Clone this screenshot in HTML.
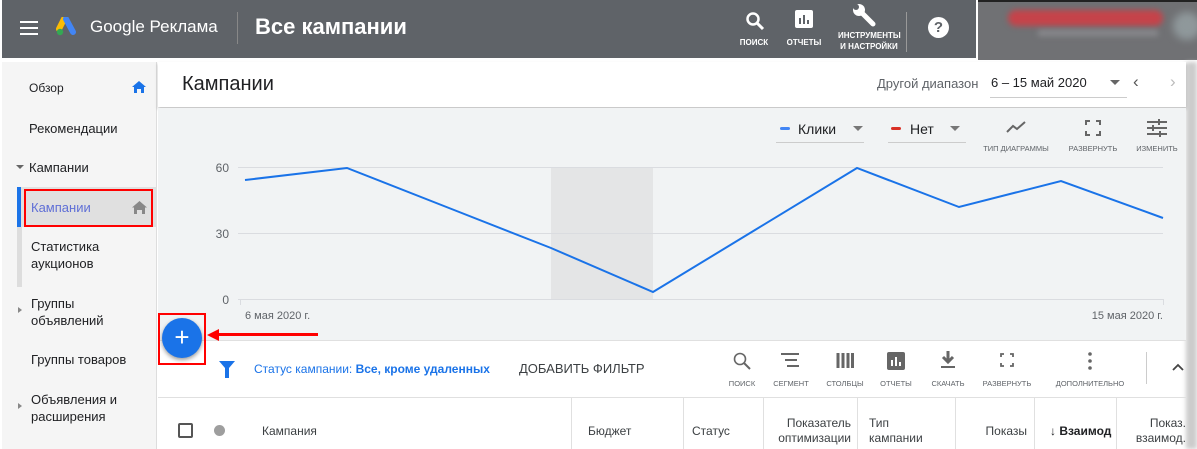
<!DOCTYPE html>
<html><head><meta charset="utf-8"><style>
*{box-sizing:border-box;margin:0;padding:0}
body{width:1197px;height:449px;overflow:hidden;background:#fff;font-family:"Liberation Sans",sans-serif;position:relative;color:#202124}
.a{position:absolute}
.top{left:2px;top:0;width:974px;height:58px;background:#5f6368}
.blur{left:978px;top:0;width:219px;height:60px;background:#707174;overflow:hidden}
.side{left:2px;top:62px;width:155px;height:387px;background:#f5f5f5;border-right:1px solid #ddd}
.si{position:absolute;left:27px;font-size:13px;color:#202124;line-height:17px}
.tb{font-size:8px;font-weight:bold;color:#fff;text-align:center;line-height:11px}
.ic{font-size:7.5px;color:#5f6368;text-align:center}
.th{font-size:12px;color:#3c4043;line-height:15px}
.vl{position:absolute;top:398px;width:1px;height:51px;background:#e0e0e0}
</style></head><body>
<div class="a top"></div>
<div class="a blur"><div class="a" style="left:0;top:0;width:219px;height:2px;background:#222"></div><div class="a" style="left:30px;top:10px;width:155px;height:16px;background:#c5434a;border-radius:8px;filter:blur(3px)"></div><div class="a" style="left:60px;top:30px;width:120px;height:6px;background:#8a8a8e;filter:blur(3px)"></div><div class="a" style="left:195px;top:12px;width:28px;height:28px;background:#8f989b;border-radius:50%;filter:blur(4px)"></div></div>
<div class="a" style="left:20px;top:21px;width:18px;height:2px;background:#fff;box-shadow:0 6px 0 #fff,0 12px 0 #fff"></div>
<svg class="a" style="left:56px;top:17px" width="24" height="20" viewBox="0 0 24 20"><path d="M8 2 L3 12" stroke="#fbbc04" stroke-width="6" stroke-linecap="round"/><path d="M10 2 L17 15" stroke="#4285f4" stroke-width="6" stroke-linecap="round"/><circle cx="4" cy="15" r="3.2" fill="#34a853"/></svg>
<div class="a" style="left:90px;top:17px;font-size:17px;color:#fff">Google Реклама</div>
<div class="a" style="left:237px;top:12px;width:1px;height:32px;background:#888"></div>
<div class="a" style="left:255px;top:14px;font-size:22px;font-weight:bold;color:#fff">Все кампании</div>
<svg class="a" style="left:745px;top:11px" width="20" height="20"><circle cx="8" cy="8" r="5.5" stroke="#fff" stroke-width="2.5" fill="none"/><path d="M12 12 L18 18" stroke="#fff" stroke-width="3"/></svg>
<div class="a tb" style="left:733px;top:37px;width:42px">ПОИСК</div>
<svg class="a" style="left:795px;top:10px" width="18" height="18"><rect width="18" height="18" rx="2" fill="#fff"/><path d="M5 14V8M9 14V5M13 14V10" stroke="#5f6368" stroke-width="2"/></svg>
<div class="a tb" style="left:783px;top:37px;width:42px">ОТЧЕТЫ</div>
<svg class="a" style="left:852px;top:3px" width="26" height="24"><path d="M5 5 L21 21" stroke="#fff" stroke-width="5" stroke-linecap="round"/><circle cx="7" cy="7" r="6" fill="#fff"/><circle cx="4" cy="4" r="3" fill="#5f6368"/></svg>
<div class="a tb" style="left:838px;top:30px;width:62px">ИНСТРУМЕНТЫ<br>И НАСТРОЙКИ</div>
<div class="a" style="left:906px;top:12px;width:1px;height:40px;background:#999"></div>
<div class="a" style="left:928px;top:17px;width:21px;height:21px;border-radius:50%;background:#fff;color:#5f6368;font-weight:bold;font-size:15px;text-align:center;line-height:21px">?</div>
<div class="a" style="left:0;top:60px;width:1186px;height:2px;background:#fff"></div>
<div class="a" style="left:1186px;top:62px;width:11px;height:387px;background:#ccc;filter:blur(2px)"></div>
<div class="a side">
<div class="si" style="top:18px;font-size:12px">Обзор</div>
<svg class="a" style="left:130px;top:19px" width="14" height="12"><path d="M7 0L14 6H12V12H9V8H5V12H2V6H0Z" fill="#1a73e8"/></svg>
<div class="si" style="top:58px">Рекомендации</div>
<div class="a" style="left:14px;top:103px;border:4px solid transparent;border-top:4px solid #666"></div>
<div class="si" style="top:97px">Кампании</div>
<div class="a" style="left:15px;top:125px;width:5px;height:100px;background:#ddd"></div>
<div class="a" style="left:15px;top:125px;width:4px;height:40px;background:#1a73e8"></div>
<div class="a" style="left:19px;top:125px;width:136px;height:40px;background:#e0e0e0"></div>
<div class="a" style="left:22px;top:127px;width:129px;height:38px;border:2px solid #f00"></div>
<div class="si" style="top:137px;left:29px;color:#5f6fd6">Кампании</div>
<svg class="a" style="left:130px;top:139px" width="15" height="13"><path d="M7.5 0L15 6.5H13V13H10V9H5V13H2V6.5H0Z" fill="#888"/></svg>
<div class="si" style="top:176px;left:29px">Статистика<br>аукционов</div>
<div class="a" style="left:16px;top:245px;border:3px solid transparent;border-left:4px solid #888"></div>
<div class="si" style="top:233px;left:29px">Группы<br>объявлений</div>
<div class="si" style="top:289px;left:29px">Группы товаров</div>
<div class="a" style="left:16px;top:341px;border:3px solid transparent;border-left:4px solid #888"></div>
<div class="si" style="top:329px;left:29px">Объявления и<br>расширения</div>
</div>
<div class="a" style="left:158px;top:62px;width:1028px;height:45px;background:#fff;box-shadow:0 2px 3px rgba(0,0,0,.25)"></div>
<div class="a" style="left:182px;top:73px;font-size:20px">Кампании</div>
<div class="a" style="left:877px;top:76px;font-size:13px;color:#5f6368">Другой диапазон</div>
<div class="a" style="left:991px;top:75px;font-size:13px">6 – 15 май 2020</div>
<div class="a" style="left:990px;top:97px;width:137px;height:1px;background:#ccc"></div>
<div class="a" style="left:1110px;top:80px;border:5px solid transparent;border-top:5px solid #666"></div>
<div class="a" style="left:1133px;top:72px;font-size:17px;color:#555">‹</div>
<div class="a" style="left:1170px;top:72px;font-size:17px;color:#bbb">›</div>
<div class="a" style="left:158px;top:108px;width:1028px;height:232px;background:#f1f3f4"></div>
<div class="a" style="left:780px;top:127px;width:10px;height:3px;background:#4285f4;border-radius:2px"></div>
<div class="a" style="left:798px;top:121px;font-size:14px">Клики</div>
<div class="a" style="left:853px;top:126px;border:5px solid transparent;border-top:5px solid #777"></div>
<div class="a" style="left:776px;top:142px;width:88px;height:1px;background:#ccc"></div>
<div class="a" style="left:891px;top:127px;width:10px;height:3px;background:#d93025;border-radius:2px"></div>
<div class="a" style="left:910px;top:121px;font-size:14px">Нет</div>
<div class="a" style="left:950px;top:126px;border:5px solid transparent;border-top:5px solid #777"></div>
<div class="a" style="left:888px;top:142px;width:78px;height:1px;background:#ccc"></div>
<svg class="a" style="left:1005px;top:120px" width="22" height="14"><path d="M2 12L8 6L12 9L20 2" stroke="#666" stroke-width="2" fill="none"/></svg>
<div class="a ic" style="left:978px;top:144px;width:76px">ТИП ДИАГРАММЫ</div>
<svg class="a" style="left:1085px;top:120px" width="16" height="16"><path d="M1 5V1H5M11 1H15V5M15 11V15H11M5 15H1V11" stroke="#666" stroke-width="2" fill="none"/></svg>
<div class="a ic" style="left:1060px;top:144px;width:66px">РАЗВЕРНУТЬ</div>
<svg class="a" style="left:1147px;top:119px" width="20" height="18"><path d="M0 3H20M0 9H20M0 15H20" stroke="#666" stroke-width="2"/><path d="M12 0V6M6 6V12M13 12V18" stroke="#666" stroke-width="2"/></svg>
<div class="a ic" style="left:1130px;top:144px;width:54px">ИЗМЕНИТЬ</div>
<svg class="a" style="left:158px;top:108px" width="1028" height="232">
<rect x="393" y="59" width="102" height="132" fill="#e4e5e6"/>
<g stroke="#dadce0" stroke-width="1"><line x1="80" y1="59.5" x2="1005" y2="59.5"/><line x1="80" y1="125.5" x2="1005" y2="125.5"/><line x1="80" y1="191.5" x2="1005" y2="191.5"/><line x1="82.5" y1="191" x2="82.5" y2="197"/><line x1="1005.5" y1="191" x2="1005.5" y2="197"/></g>
<g font-size="12" fill="#5f6368" font-family="Liberation Sans" text-anchor="end"><text x="71" y="64">60</text><text x="71" y="130">30</text><text x="71" y="196">0</text></g>
<g font-size="11" fill="#5f6368" font-family="Liberation Sans"><text x="87" y="211">6 мая 2020 г.</text><text x="1005" y="211" text-anchor="end">15 мая 2020 г.</text></g>
<polyline fill="none" stroke="#1a73e8" stroke-width="2" points="87,72 189,60 291,100 393,140 495,184 597,122 699,60 801,99 903,73 1005,110"/>
</svg>
<div class="a" style="left:158px;top:340px;width:1028px;height:1px;background:#e0e0e0"></div>
<div class="a" style="left:218px;top:333px;width:100px;height:3px;background:#f00"></div>
<div class="a" style="left:207px;top:329px;border:6px solid transparent;border-right:12px solid #f00;border-left:0"></div>
<div class="a" style="left:162px;top:318px;width:40px;height:40px;border-radius:50%;background:#1a73e8;box-shadow:0 2px 4px rgba(0,0,0,.4);color:#fff;font-size:26px;text-align:center;line-height:38px">+</div>
<div class="a" style="left:158px;top:313px;width:48px;height:52px;border:2px solid #f00"></div>
<svg class="a" style="left:219px;top:361px" width="16" height="17"><path d="M0 0H16L10 7V17H6V7Z" fill="#1a73e8"/></svg>
<div class="a" style="left:254px;top:362px;font-size:12px;color:#1a73e8">Статус кампании: <b>Все, кроме удаленных</b></div>
<div class="a" style="left:519px;top:361px;font-size:13px;color:#3c4043">ДОБАВИТЬ ФИЛЬТР</div>
<svg class="a" style="left:733px;top:352px" width="18" height="18"><circle cx="7" cy="7" r="5.5" stroke="#666" stroke-width="1.6" fill="none"/><path d="M11 11L17 17" stroke="#666" stroke-width="2"/></svg>
<div class="a ic" style="left:722px;top:379px;width:40px">ПОИСК</div>
<svg class="a" style="left:781px;top:353px" width="20" height="14"><path d="M0 1H18M4 7H16M6 13H18" stroke="#666" stroke-width="2"/></svg>
<div class="a ic" style="left:766px;top:379px;width:50px">СЕГМЕНТ</div>
<svg class="a" style="left:836px;top:353px" width="18" height="15"><path d="M2 0V15M7 0V15M12 0V15M16.5 0V15" stroke="#666" stroke-width="3"/></svg>
<div class="a ic" style="left:822px;top:379px;width:46px">СТОЛБЦЫ</div>
<svg class="a" style="left:887px;top:352px" width="18" height="18"><rect width="18" height="18" rx="2" fill="#666"/><path d="M5 14V8M9 14V5M13 14V10" stroke="#fff" stroke-width="2"/></svg>
<div class="a ic" style="left:876px;top:379px;width:40px">ОТЧЕТЫ</div>
<svg class="a" style="left:940px;top:351px" width="16" height="18"><path d="M8 0V10M3 6L8 11L13 6" stroke="#666" stroke-width="3" fill="none"/><path d="M1 16H15" stroke="#666" stroke-width="2"/></svg>
<div class="a ic" style="left:926px;top:379px;width:44px">СКАЧАТЬ</div>
<svg class="a" style="left:1000px;top:353px" width="14" height="14"><path d="M1 4V1H4M10 1H13V4M13 10V13H10M4 13H1V10" stroke="#666" stroke-width="1.8" fill="none"/></svg>
<div class="a ic" style="left:976px;top:379px;width:62px">РАЗВЕРНУТЬ</div>
<svg class="a" style="left:1088px;top:352px" width="4" height="18"><circle cx="2" cy="2" r="1.8" fill="#666"/><circle cx="2" cy="9" r="1.8" fill="#666"/><circle cx="2" cy="16" r="1.8" fill="#666"/></svg>
<div class="a ic" style="left:1050px;top:379px;width:80px">ДОПОЛНИТЕЛЬНО</div>
<div class="a" style="left:1146px;top:352px;width:1px;height:32px;background:#ccc"></div>
<svg class="a" style="left:1172px;top:363px" width="12" height="8"><path d="M1 7L6 2L11 7" stroke="#444" stroke-width="1.8" fill="none"/></svg>
<div class="a" style="left:158px;top:397px;width:1028px;height:1px;background:#e0e0e0"></div>
<div class="a" style="left:178px;top:423px;width:15px;height:15px;border:2px solid #555;border-radius:2px"></div>
<div class="a" style="left:214px;top:425px;width:11px;height:11px;border-radius:50%;background:#9e9e9e"></div>
<div class="a th" style="left:262px;top:424px">Кампания</div>
<div class="vl" style="left:571px"></div>
<div class="a th" style="left:588px;top:424px">Бюджет</div>
<div class="vl" style="left:683px"></div>
<div class="a th" style="left:692px;top:424px">Статус</div>
<div class="vl" style="left:763px"></div>
<div class="a th" style="left:764px;top:416px;width:87px;text-align:right">Показатель<br>оптимизации</div>
<div class="vl" style="left:857px"></div>
<div class="a th" style="left:869px;top:416px">Тип<br>кампании</div>
<div class="vl" style="left:955px"></div>
<div class="a th" style="left:960px;top:424px;width:67px;text-align:right">Показы</div>
<div class="vl" style="left:1034px"></div>
<div class="a th" style="left:1050px;top:424px;font-weight:bold;width:64px;overflow:hidden;white-space:nowrap;color:#202124">↓ Взаимод</div>
<div class="vl" style="left:1116px"></div>
<div class="a th" style="left:1120px;top:416px;width:66px;text-align:right">Показ.<br>взаимод.</div>
</body></html>
